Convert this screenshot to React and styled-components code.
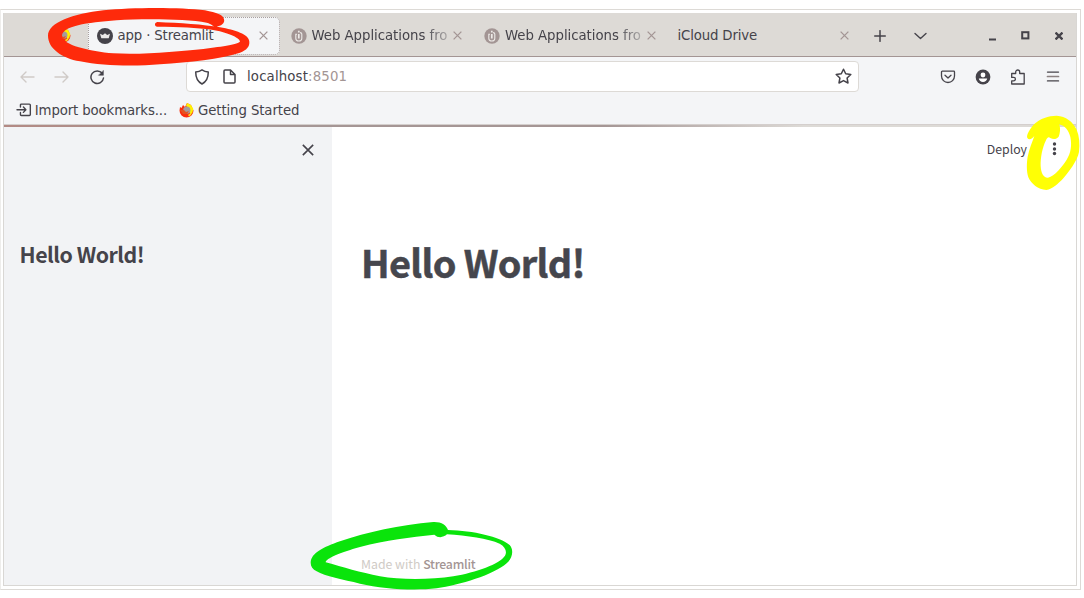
import React from "react";
import styled, { createGlobalStyle } from "styled-components";

const ink = "#45434a";
const taupe = "#a39594";
const stone = "#dddad6";
const mist = "#f4f5f7";

const Global = createGlobalStyle`
  * { box-sizing: border-box; }
  html, body, #root { height: 100%; }
  body { margin: 0; background: #fff; overflow: hidden; }
`;

const Page = styled.div`
  position: relative;
  width: 1084px;
  height: 598px;
  padding: 9px 3px 8px 0;
`;
const Frame = styled.div`
  height: 581px;
  border: 1px solid ${stone};
  border-left-color: #eeedeb;
  padding: 3px 3px 3px 2px;
`;
const Browser = styled.div`
  height: 573px;
  border: solid #d9d7d4;
  border-width: 0 1px 1px 1px;
  display: flex;
  flex-direction: column;
  font-family: "DejaVu Sans", sans-serif;
  font-size: 13.3px;
  color: ${ink};
`;

const TabBar = styled.div`
  flex: 0 0 44px;
  display: flex;
  align-items: center;
  padding-top: 2px;
  background: ${stone};
  border-bottom: 1px solid ${taupe};
`;
const FirstIcon = styled.div`
  width: 84px;
  padding-left: 52px;
  display: flex;
`;
const TabBox = styled.div`
  width: ${(p) => (p.$active ? 192 : 193.5)}px;
  margin-right: ${(p) => (p.$active ? 2 : 0)}px;
  height: 38px;
  padding-left: 7.5px;
  display: flex;
  align-items: center;
  border-radius: 5px;
  border: 1px ${(p) => (p.$active ? "dotted #a9a09f" : "solid transparent")};
  background: ${(p) => (p.$active ? mist : "transparent")};
`;
const TabIcon = styled.span`
  display: flex;
  margin-right: 5px;
  width: 16px;
`;
const TabTitle = styled.span`
  flex: 0 0 ${(p) => p.$width}px;
  overflow: hidden;
  white-space: nowrap;
  line-height: 20px;
  letter-spacing: ${(p) => p.$track || 0}px;
  ${(p) => p.$fade && "mask-image: linear-gradient(90deg, #000 82%, rgba(0,0,0,.3));"}
`;
const TabClose = styled.span`
  display: flex;
  margin-left: auto;
  margin-right: ${(p) => (p.$active ? 11 : 12.5)}px;
`;
const BarIcon = styled.span`
  width: ${(p) => p.$w}px;
  display: flex;
  justify-content: center;
`;
const Push = styled.span`flex: 1;`;

const NavBar = styled.div`
  flex: 0 0 39px;
  display: flex;
  align-items: center;
  background: ${mist};
`;
const NavButtons = styled.div`
  width: 182px;
  display: flex;
  align-items: center;
  padding-left: 15px;
  gap: 19px;
`;
const Address = styled.div`
  width: 673px;
  height: 31px;
  border: 1px solid ${stone};
  border-radius: 4px;
  background: #fff;
  display: flex;
  align-items: center;
  padding: 0 6px 0 7px;
`;
const Url = styled.span`
  margin-left: -1px;
  flex: 1;
  letter-spacing: 0.15px;
  line-height: 20px;
`;
const Port = styled.span`color: ${taupe};`;
const NavTools = styled.div`
  flex: 1;
  display: flex;
  justify-content: flex-end;
  align-items: center;
  gap: 19px;
  padding-right: 15px;
`;
const Bookmarks = styled.div`
  flex: 0 0 28px;
  display: flex;
  align-items: center;
  background: ${mist};
  padding-left: 12px;
`;
const Bookmark = styled.span`
  display: flex;
  align-items: center;
  gap: ${(p) => p.$gap}px;
  margin-right: 12px;
  white-space: nowrap;
  width: ${(p) => p.$w}px;
  letter-spacing: ${(p) => p.$track || 0}px;
`;
const Rule = styled.div`
  flex: 0 0 3px;
  border-top: 1px solid #d4cfcd;
  background: linear-gradient(90deg, #b38a84 0, #a59695 270px, #a59695 600px, ${stone} 800px);
`;

const Content = styled.div`
  flex: 1;
  display: flex;
  min-height: 0;
  font-family: "Noto Sans CJK SC", "Noto Sans CJK JP", sans-serif;
`;
const Sidebar = styled.aside`
  width: 328px;
  background: #f2f3f5;
  display: flex;
  flex-direction: column;
`;
const SidebarTop = styled.div`
  height: 111px;
  padding: 17px 18px 0 0;
  display: flex;
  justify-content: flex-end;
  align-items: flex-start;
`;
const SidebarTitle = styled.h2`
  margin: 0 0 0 15.5px;
  font-size: 21.3px;
  line-height: 32px;
  letter-spacing: -0.48px;
  font-weight: 700;
`;
const Main = styled.main`
  flex: 1;
  display: flex;
  flex-direction: column;
  padding-left: 29px;
  background: #fff;
`;
const Header = styled.div`
  height: 105px;
  padding: 12px 19px 0 0;
  display: flex;
  justify-content: flex-end;
  gap: 25px;
  font-size: 12.3px;
  line-height: 20px;
`;
const Title = styled.h1`
  margin: 0;
  font-size: 37.9px;
  line-height: 60px;
  letter-spacing: -0.7px;
  font-weight: 700;
  color: #45464d;
  -webkit-text-stroke: 0.5px #45464d;
`;
const Footer = styled.footer`
  margin-top: auto;
  height: 31px;
  font-size: 12.3px;
  line-height: 20px;
  color: #d0cbc6;
`;
const Brand = styled.span`
  color: ${taupe};
  font-weight: 500;
  letter-spacing: -0.25px;
`;
const Marks = styled.svg`
  position: absolute;
  inset: 0;
  pointer-events: none;
`;

const Cross = ({ size = 8, color = taupe, w = 1.3 }) => (
  <svg width={size} height={size} viewBox="0 0 10 10" stroke={color} strokeWidth={w * 10 / size} fill="none">
    <path d="M.7.7l8.6 8.6M9.3.7L.7 9.3" />
  </svg>
);
const Line = ({ w = 16, h = 16, color = ink, sw = 1.4, children }) => (
  <svg width={w} height={h} viewBox={`0 0 ${w} ${h}`} fill="none" stroke={color} strokeWidth={sw} strokeLinecap="round" strokeLinejoin="round">
    {children}
  </svg>
);
const Fox = () => (
  <svg width="15" height="15" viewBox="0 0 15 15">
    <path d="M1 4l1.5 1L4 2l2 2 2-4 4 2 2.5 5.5a7 7 0 0 1-14 0z" fill="#fb2d0c" />
    <path d="M8 0l4 2 2.3 4-1 4-2 1L10 5 7 3z" fill="#fff200" />
    <circle cx="7.8" cy="7.2" r="3.6" fill="#a69b9c" />
    <path d="M1 7l4 0 2 2 3-1-2 3H4z" fill="#e55220" />
    <path d="M9 12l4-3-1 3-2 1.5z" fill="#f8dd20" />
  </svg>
);
const Crown = () => (
  <svg width="16" height="16" viewBox="0 0 16 16">
    <circle cx="8" cy="8" r="8" fill={ink} />
    <path d="M3 5.800L5.800 7 8 5.300 10.200 7l2.800-1.200-1.300 4.400H4.300z" fill="#eceaea" />
  </svg>
);
const Info = () => (
  <svg width="16" height="16" viewBox="0 0 16 16">
    <circle cx="8" cy="8" r="7.7" fill={taupe} />
    <path d="M6 6.300H4.800v4.200c0 3.400 6 3.400 6 0V6c0-1-1-1.400-1.800-1.400" fill="none" stroke="#edeae7" strokeWidth="1.1" />
    <path d="M7.800 2.800v1.700M7.800 6v4.500" fill="none" stroke="#edeae7" strokeWidth="1.7" />
  </svg>
);

const Tab = ({ icon, title, active, fade, width, track }) => (
  <TabBox $active={active}>
    {icon && <TabIcon>{icon}</TabIcon>}
    <TabTitle $width={width} $fade={fade} $track={track}>{title}</TabTitle>
    <TabClose $active={active}><Cross size={9} w={1.3} /></TabClose>
  </TabBox>
);

export default function App() {
  return (
    <Page>
      <Global />
      <Frame>
        <Browser>
          <TabBar>
            <FirstIcon><Fox /></FirstIcon>
            <Tab active icon={<Crown />} title="app · Streamlit" width={120} track={-0.15} />
            <Tab fade icon={<Info />} title="Web Applications from" width={136} track={-0.04} />
            <Tab fade icon={<Info />} title="Web Applications from" width={136} track={-0.04} />
            <Tab title="iCloud Drive" width={120} track={-0.15} />
            <BarIcon $w={35}><Line w={12} h={12} sw={1.5}><path d="M6 .7v10.6M.7 6h10.6" /></Line></BarIcon>
            <BarIcon $w={45}><Line w={13} h={8}><path d="M1 1.5l5.5 5 5.5-5" /></Line></BarIcon>
            <Push />
            <BarIcon $w={33}><svg width="9" height="10"><path d="M1 8.5h7" stroke={ink} strokeWidth="2" /></svg></BarIcon>
            <BarIcon $w={33}><svg width="9" height="9"><rect x="1.2" y="1.2" width="6.2" height="6.2" fill="none" stroke={ink} strokeWidth="2" /></svg></BarIcon>
            <BarIcon $w={34}><Cross size={8} color={ink} w={2.3} /></BarIcon>
          </TabBar>
          <NavBar>
            <NavButtons>
              <Line color="#cfcac7"><path d="M15 8H2M7 3L2 8l5 5" /></Line>
              <Line color="#cfcac7"><path d="M1 8h13M9 3l5 5-5 5" /></Line>
              <Line sw={1.5}><path d="M13.200 4.300A6.300 6.300 0 1 0 14.500 9" /><path d="M14.400 1.700v4.600H9.800z" fill={ink} strokeWidth=".5" /></Line>
            </NavButtons>
            <Address>
              <Line sw={1.5}><path d="M8 .9c1.8 1.3 4 2 6.3 2.2 0 5.7-1.6 9.6-6.3 11.9C3.3 12.7 1.7 8.8 1.7 3.1 4 2.900 6.200 2.200 8 .9z" /></Line>
              <BarIcon $w={38}>
                <Line w={13} h={15} sw={1.5}><path d="M1 2Q1 1 2 1h5.500L12 5.500V13q0 1-1 1H2q-1 0-1-1zM7.500 1v4.500H12" /></Line>
              </BarIcon>
              <Url>localhost<Port>:8501</Port></Url>
              <Line w={17} h={17} sw={1.5}><path d="M8.500 1.200l2.200 4.600 5.100.7-3.700 3.500.9 5-4.500-2.400L4 15l.9-5L1.200 6.500l5.100-.7z" /></Line>
            </Address>
            <NavTools>
              <Line sw={1.3}><path d="M2.300 2.200h11.400q.8 0 .8.800v4a6.500 6.500 0 0 1-13 0V3q0-.8.8-.8zM5 6.300l3 2.800 3-2.800" /></Line>
              <svg width="16" height="16" viewBox="0 0 16 16">
                <circle cx="8" cy="8" r="7.400" fill={ink} />
                <circle cx="8" cy="6" r="2.400" fill="#fff" />
                <path d="M3.800 9.500h8.400c-.5 2-2 3.500-4.200 3.500s-3.700-1.500-4.200-3.500z" fill="#fff" />
              </svg>
              <Line sw={1.300}><path d="M1.700 4.500h4V3a2 2 0 0 1 4 0v1.500h4.500V15H1.700v-3.200h2a1.700 1.700 0 0 0 0-3.400h-2z" /></Line>
              <Line sw={1.400}><path d="M2.500 3.100h11M2.500 11.900h11" /><path d="M2.500 7.500h11" stroke="#8b8181" strokeWidth="1.700" /></Line>
            </NavTools>
          </NavBar>
          <Bookmarks>
            <Bookmark $w={151} $gap={3} $track={-0.13}>
              <Line sw={1.400}><path d="M4.500 5V3q0-1 1-1h8q1 0 1 1v9.500q0 1-1 1h-8q-1 0-1-1V10.500M1 7.700h9M7.500 5L10 7.700 7.500 10.400" /></Line>
              Import bookmarks...
            </Bookmark>
            <Bookmark $gap={4} $track={-0.1}><Fox />Getting Started</Bookmark>
          </Bookmarks>
          <Rule />
          <Content>
            <Sidebar>
              <SidebarTop><Cross size={12} color={ink} w={1.600} /></SidebarTop>
              <SidebarTitle>Hello World!</SidebarTitle>
            </Sidebar>
            <Main>
              <Header>
                <span>Deploy</span>
                <svg width="5" height="20" fill={ink}>
                  <circle cx="2.500" cy="5" r="1.700" /><circle cx="2.500" cy="10" r="1.700" /><circle cx="2.500" cy="14.500" r="1.700" />
                </svg>
              </Header>
              <Title>Hello World!</Title>
              <Footer>Made with <Brand>Streamlit</Brand></Footer>
            </Main>
          </Content>
        </Browser>
      </Frame>
      <Marks width="1084" height="598" fillRule="evenodd">
        <g transform="scale(.33333)" fill="#fe2a0b">
          <path d="M672 58C670 45 650 38 615 31C540 22 400 22 310 31C220 41 144 68 144 107C144 145 185 174 240 184C310 199 410 199 480 193C570 186 660 178 720 158C740 150 749 140 748 125C747 103 705 90 660 82C610 73 540 69 472 66C462 68 463 80 472 80C540 81 590 83 635 89C680 96 718 112 720 124C720 132 670 140 610 147C540 154 430 165 340 160C270 154 186 135 186 108C187 78 260 68 350 61C430 56 560 57 620 68C637 72 636 79 650 80C662 79 676 70 672 58Z" />
        </g>
        <g transform="translate(1020 110) scale(.33333)" fill="#ffff05">
          <path d="M22 84C18 76 30 55 43 42C60 26 85 17 110 17C138 19 158 34 170 59C178 78 180 102 177 126C172 153 146 186 130 205C116 220 97 238 79 240C54 239 34 222 25 202C19 182 20 158 23 140C28 116 36 98 43 78C37 87 27 91 22 84ZM118 43C122 58 120 70 116 80C109 89 99 89 91 84C85 79 81 84 78 91C67 112 61 145 62 168C63 190 71 204 84 203C104 198 127 170 140 149C153 129 156 105 151 81C146 61 134 47 118 43Z" />
        </g>
        <g transform="translate(300 500) scale(.33333)" fill="#0ae40b">
          <path d="M32 188C34 158 70 142 120 124C200 96 300 75 400 66C424 65 440 76 444 90C520 92 600 110 629 135C642 150 638 174 620 190C580 225 480 255 410 265C340 273 250 267 180 251C130 239 74 229 50 214C38 207 32 200 32 188ZM77 187C78 175 120 158 180 141C260 119 330 112 403 104C415 115 430 113 441 103C500 107 565 116 599 131C616 140 622 155 615 167C598 193 530 216 460 229C390 240 300 240 240 229C180 217 130 202 77 187Z" />
        </g>
      </Marks>
    </Page>
  );
}
